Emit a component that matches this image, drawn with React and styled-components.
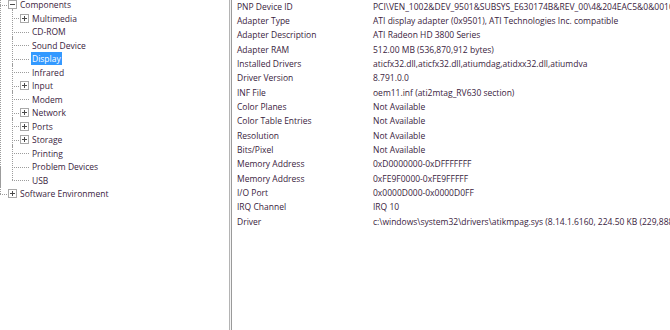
import React from "react";
import styled, { createGlobalStyle } from "styled-components";

const GlobalStyle = createGlobalStyle`
  html, body {
    margin: 0;
    padding: 0;
    background: #ffffff;
    overflow: hidden;
  }
  * {
    box-sizing: border-box;
  }
`;

const Window = styled.div`
  display: flex;
  width: 670px;
  height: 330px;
  background: #ffffff;
  font-family: "Open Sans", "Noto Sans", sans-serif;
  font-size: 8.5px;
  color: #3a2340;
`;

const TreePane = styled.div`
  width: 229px;
  flex-shrink: 0;
  overflow: hidden;
  padding-top: 0;
`;

const Splitter = styled.div`
  width: 3px;
  flex-shrink: 0;
  border-left: 1px solid #b4b4b4;
  border-right: 1px solid #9a9a9a;
  background: #f4f4f4;
`;

const DetailPane = styled.div`
  flex: 1;
  overflow: hidden;
  padding: 0 0 0 5px;
  margin-top: -1px;
`;

const TreeList = styled.ul`
  list-style: none;
  margin: 0;
  padding: 0;
`;

const TreeItem = styled.li`
  position: relative;

  &::before {
    content: "";
    position: absolute;
    left: ${(p) => p.$line}px;
    top: ${(p) => (p.$depth === 1 ? -20 : -3)}px;
    ${(p) => (p.$last ? "height: calc(6.75px + " + (p.$depth === 1 ? 20 : 3) + "px);" : "bottom: 0;")}
    border-left: 1px dotted #9c9c9c;
  }
`;

const Row = styled.div`
  position: relative;
  height: 13.5px;
  display: flex;
  align-items: center;
  padding-left: ${(p) => p.$text}px;
  white-space: nowrap;

  &::after {
    content: "";
    position: absolute;
    left: ${(p) => p.$line}px;
    top: 6.5px;
    width: ${(p) => p.$text - p.$line - 2}px;
    border-top: 1px dotted #9c9c9c;
  }
`;

const Expander = styled.span`
  position: absolute;
  z-index: 1;
  left: ${(p) => p.$left}px;
  top: 2px;
  width: 9px;
  height: 9px;
  border: 1px solid #a8a8a8;
  background: #ffffff;

  &::before {
    content: "";
    position: absolute;
    left: 1px;
    top: 3px;
    width: 5px;
    border-top: 1px solid #4a4a4a;
  }

  &::after {
    content: "";
    display: ${(p) => (p.$open ? "none" : "block")};
    position: absolute;
    left: 3px;
    top: 1px;
    height: 5px;
    border-left: 1px solid #4a4a4a;
  }
`;

const Label = styled.span`
  position: relative;
  z-index: 1;
  padding: 0 1px;
  line-height: 13px;
  background: ${(p) => (p.$selected ? "#3399ff" : "#ffffff")};
  color: ${(p) => (p.$selected ? "#ffffff" : "inherit")};
`;

const Grid = styled.div`
  display: grid;
  grid-template-columns: 136px auto;
  grid-auto-rows: 14.33px;
  align-items: center;
  white-space: nowrap;
`;

const Cell = styled.div`
  overflow: visible;
`;

const tree = [
  {
    name: "Components",
    open: true,
    children: [
      { name: "Multimedia", expandable: true },
      { name: "CD-ROM" },
      { name: "Sound Device" },
      { name: "Display", selected: true },
      { name: "Infrared" },
      { name: "Input", expandable: true },
      { name: "Modem" },
      { name: "Network", expandable: true },
      { name: "Ports", expandable: true },
      { name: "Storage", expandable: true },
      { name: "Printing" },
      { name: "Problem Devices" },
      { name: "USB" },
    ],
  },
  { name: "Software Environment", expandable: true },
];

const details = [
  ["PNP Device ID", "PCI\\VEN_1002&DEV_9501&SUBSYS_E630174B&REV_00\\4&204EAC5&0&0010"],
  ["Adapter Type", "ATI display adapter (0x9501), ATI Technologies Inc. compatible"],
  ["Adapter Description", "ATI Radeon HD 3800 Series"],
  ["Adapter RAM", "512.00 MB (536,870,912 bytes)"],
  ["Installed Drivers", "aticfx32.dll,aticfx32.dll,atiumdag,atidxx32.dll,atiumdva"],
  ["Driver Version", "8.791.0.0"],
  ["INF File", "oem11.inf (ati2mtag_RV630 section)"],
  ["Color Planes", "Not Available"],
  ["Color Table Entries", "Not Available"],
  ["Resolution", "Not Available"],
  ["Bits/Pixel", "Not Available"],
  ["Memory Address", "0xD0000000-0xDFFFFFFF"],
  ["Memory Address", "0xFE9F0000-0xFE9FFFFF"],
  ["I/O Port", "0x0000D000-0x0000D0FF"],
  ["IRQ Channel", "IRQ 10"],
  ["Driver", "c:\\windows\\system32\\drivers\\atikmpag.sys (8.14.1.6160, 224.50 KB (229,888 bytes), 2010-10-26 01:41)"],
];

function TreeNode({ node, depth, last }) {
  const line = depth === 1 ? 0 : 12 * (depth - 1);
  const boxLeft = 12 * depth - 4;
  const text = depth === 1 ? 19 : 31;
  const hasBox = node.open || node.expandable;
  return (
    <TreeItem $line={line} $last={last} $depth={depth}>
      <Row $line={line} $text={text}>
        {hasBox && <Expander $left={boxLeft} $open={node.open} />}
        <Label $selected={node.selected}>{node.name}</Label>
      </Row>
      {node.open && node.children && (
        <TreeList>
          {node.children.map((child, i) => (
            <TreeNode
              key={child.name}
              node={child}
              depth={depth + 1}
              last={i === node.children.length - 1}
            />
          ))}
        </TreeList>
      )}
    </TreeItem>
  );
}

export default function App() {
  return (
    <>
      <GlobalStyle />
      <Window>
        <TreePane>
          <TreeList style={{ marginTop: "-2px" }}>
            {tree.map((node, i) => (
              <TreeNode key={node.name} node={node} depth={1} last={i === tree.length - 1} />
            ))}
          </TreeList>
        </TreePane>
        <Splitter />
        <DetailPane>
          <Grid>
            {details.map(([k, v], i) => (
              <React.Fragment key={i}>
                <Cell>{k}</Cell>
                <Cell>{v}</Cell>
              </React.Fragment>
            ))}
          </Grid>
        </DetailPane>
      </Window>
    </>
  );
}
